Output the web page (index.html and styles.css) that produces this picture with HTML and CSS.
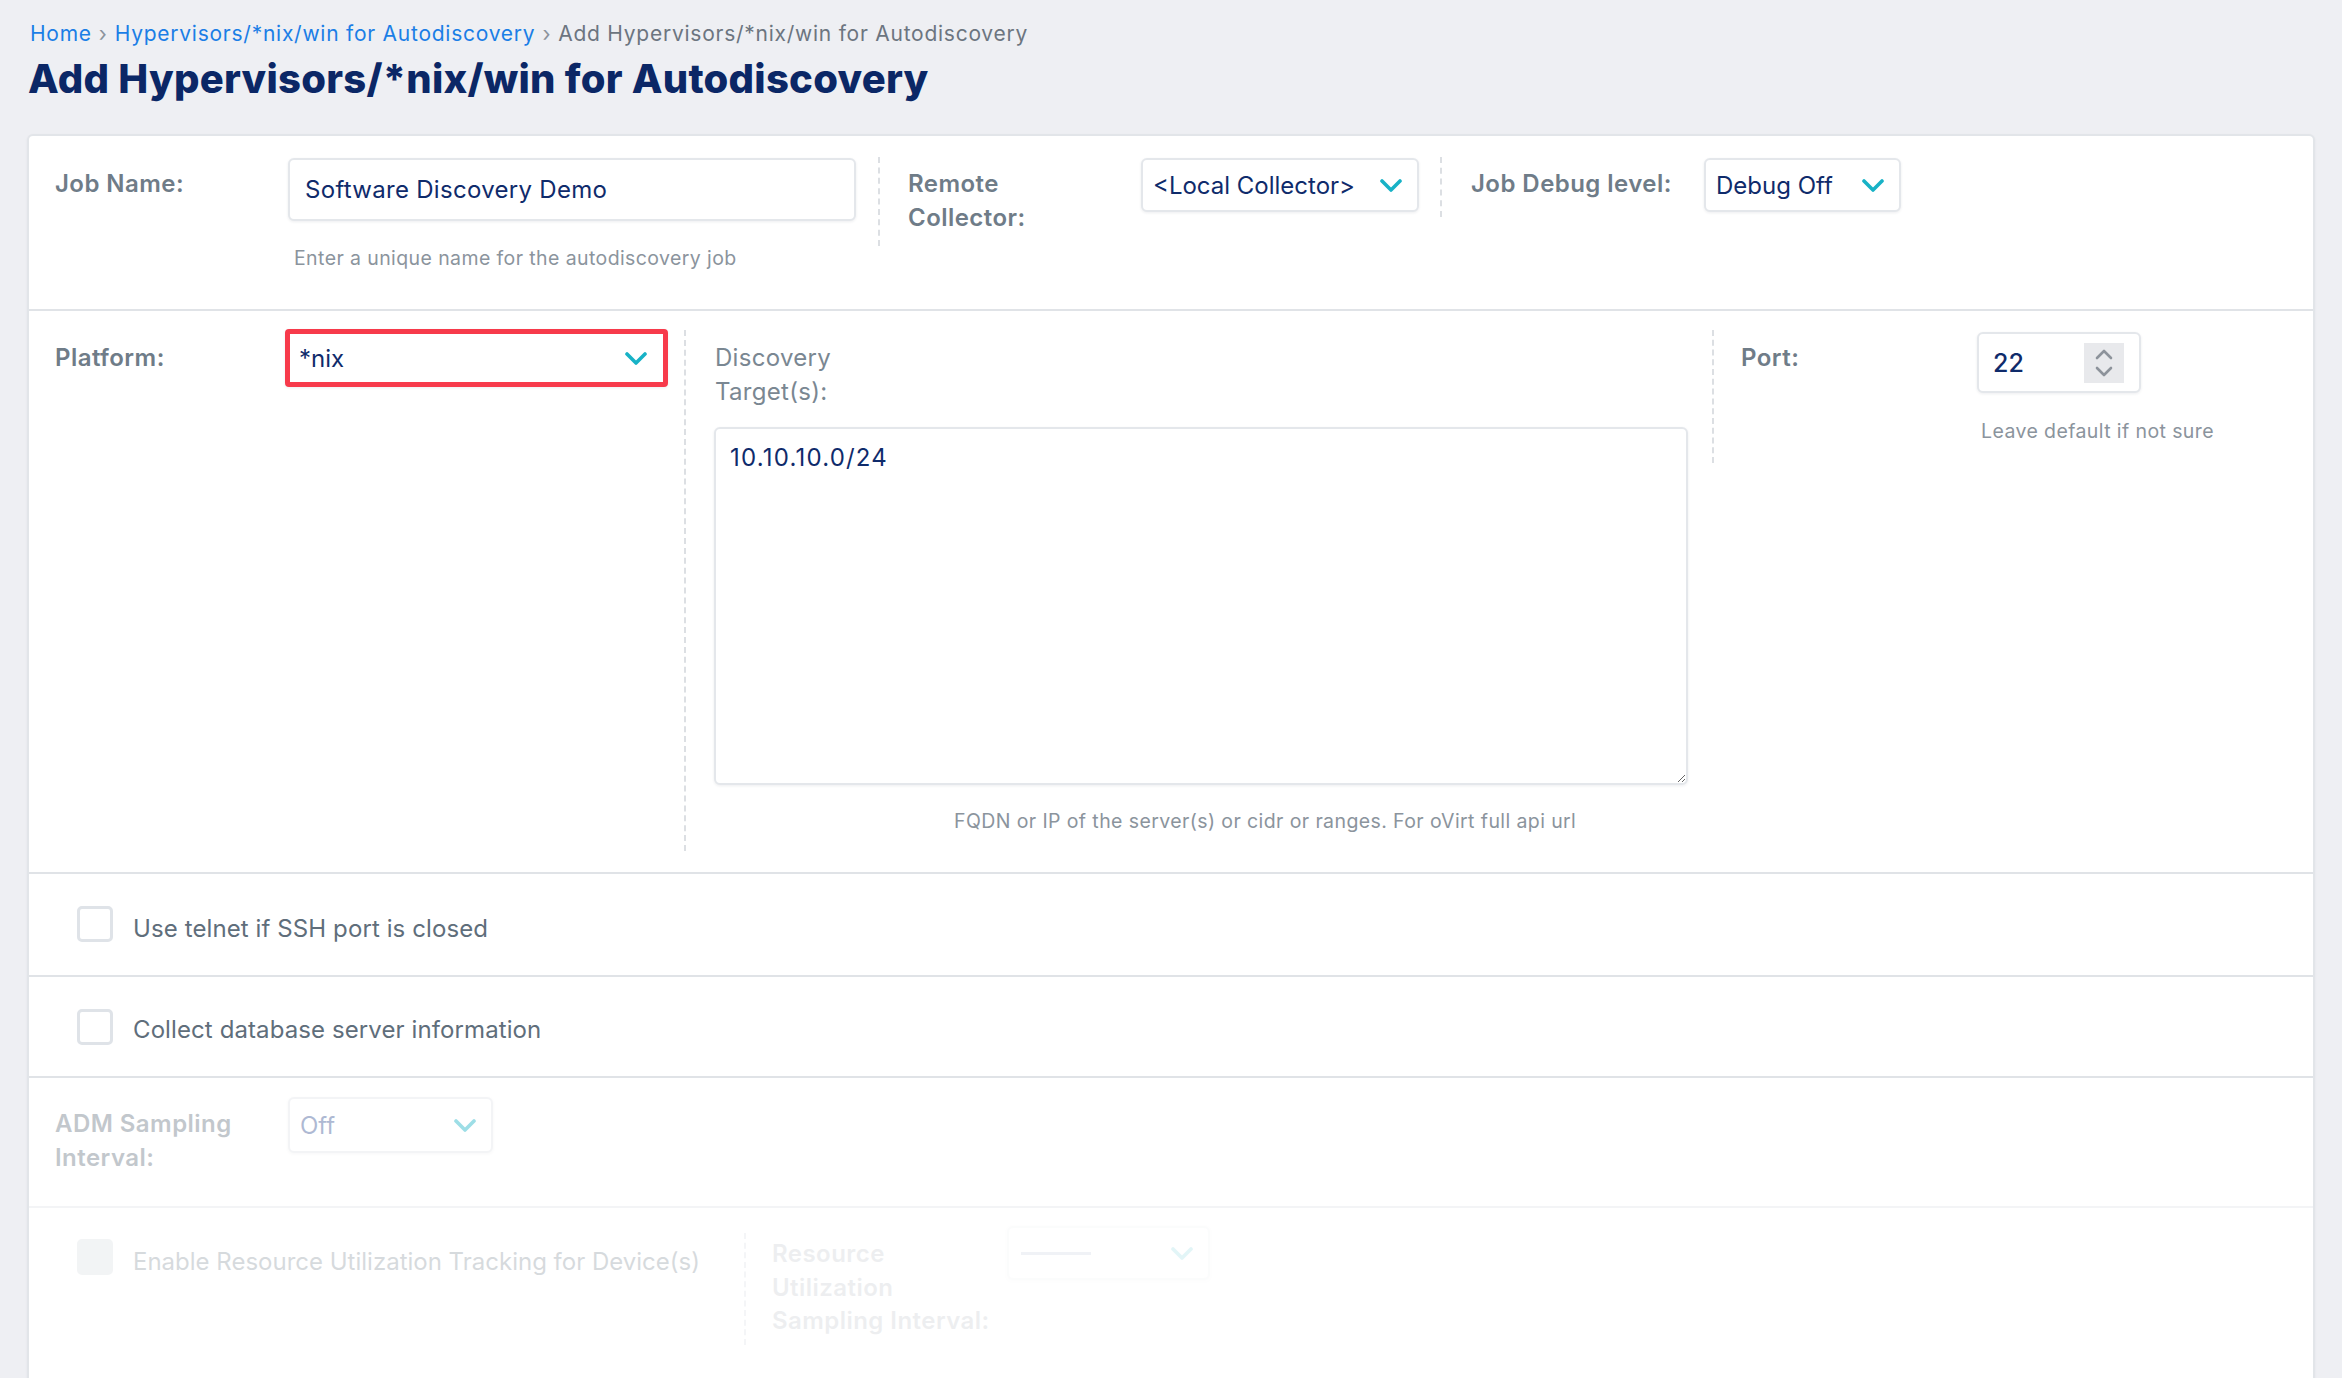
FILE: index.html
```html
<!DOCTYPE html>
<html lang="en">
<head>
<meta charset="utf-8">
<title>Add Hypervisors/*nix/win for Autodiscovery</title>
<link rel="stylesheet" href="styles.css">
</head>
<body>
<div class="page">
  <nav class="crumbs">
    <a class="crumb-link">Home</a><span class="sep">›</span><a class="crumb-link">Hypervisors/*nix/win for Autodiscovery</a><span class="sep">›</span><span class="crumb-current">Add Hypervisors/*nix/win for Autodiscovery</span>
  </nav>
  <h1 class="title">Add Hypervisors/*nix/win for Autodiscovery</h1>

  <div class="card">
    <!-- Row 1 -->
    <div class="row row-1">
      <div class="field">
        <div class="label bold">Job Name:</div>
        <div class="stack">
          <div class="input w-job">Software Discovery Demo</div>
          <div class="help help-job">Enter a unique name for the autodiscovery job</div>
        </div>
      </div>
      <div class="vdiv d-r1a"></div>
      <div class="field">
        <div class="label bold">Remote<br>Collector:</div>
        <div class="select w-collector"><span>&lt;Local Collector&gt;</span><svg class="chev" viewBox="0 0 22 13"><polyline points="2,2 11,11 20,2"/></svg></div>
      </div>
      <div class="vdiv d-r1b"></div>
      <div class="field">
        <div class="label bold">Job Debug level:</div>
        <div class="select w-debug"><span>Debug Off</span><svg class="chev" viewBox="0 0 22 13"><polyline points="2,2 11,11 20,2"/></svg></div>
      </div>
    </div>

    <!-- Row 2 -->
    <div class="row row-2">
      <div class="field">
        <div class="label bold lbl-platform">Platform:</div>
        <div class="select select-error w-platform"><span>*nix</span><svg class="chev" viewBox="0 0 22 13"><polyline points="2,2 11,11 20,2"/></svg></div>
      </div>
      <div class="vdiv d-r2a"></div>
      <div class="targets">
        <div class="label lbl-targets">Discovery<br>Target(s):</div>
        <textarea class="textarea">10.10.10.0/24</textarea>
        <div class="help help-targets">FQDN or IP of the server(s) or cidr or ranges. For oVirt full api url</div>
      </div>
      <div class="vdiv d-r2b"></div>
      <div class="field">
        <div class="label bold lbl-port">Port:</div>
        <div class="stack">
          <div class="number">
            <span>22</span>
            <span class="spin">
              <svg viewBox="0 0 18 28"><polyline points="2,9 9,2 16,9"/><polyline points="2,19 9,26 16,19"/></svg>
            </span>
          </div>
          <div class="help help-port">Leave default if not sure</div>
        </div>
      </div>
    </div>

    <!-- Row 3 -->
    <div class="row row-check row-3">
      <span class="checkbox"></span>
      <span class="check-text">Use telnet if SSH port is closed</span>
    </div>

    <!-- Row 4 -->
    <div class="row row-check row-4">
      <span class="checkbox"></span>
      <span class="check-text">Collect database server information</span>
    </div>

    <!-- Row 5 -->
    <div class="row row-5">
      <div class="faded">
        <div class="field">
          <div class="label bold lbl-adm">ADM Sampling<br>Interval:</div>
          <div class="select w-adm"><span>Off</span><svg class="chev" viewBox="0 0 22 13"><polyline points="2,2 11,11 20,2"/></svg></div>
        </div>
      </div>
    </div>

    <!-- Row 6 -->
    <div class="row row-6">
      <div class="row6-inner">
        <div class="check-group">
          <span class="checkbox checkbox-disabled"></span>
          <span class="check-text">Enable Resource Utilization Tracking for Device(s)</span>
        </div>
        <div class="vdiv d-r6"></div>
        <div class="field very-faded">
          <div class="label bold lbl-res">Resource<br>Utilization<br>Sampling Interval:</div>
          <div class="select w-res"><span class="dash-line"></span><svg class="chev" viewBox="0 0 22 13"><polyline points="2,2 11,11 20,2"/></svg></div>
        </div>
      </div>
    </div>
  </div>
</div>
</body>
</html>
```
FILE: styles.css
```css
* { box-sizing: border-box; }

html, body {
  margin: 0;
  padding: 0;
  background: #eeeff3;
  font-family: Inter, "Noto Sans", "Liberation Sans", sans-serif;
  color: #0f2b6b;
  overflow: hidden;
}

.page {
  padding: 19px 27px 0 27px;
}

.crumbs {
  font-size: 21px;
  line-height: 29px;
  padding-left: 3px;
  white-space: nowrap;
  letter-spacing: 0.75px;
}

.crumb-link { color: #1b7ee6; }
.crumb-current { color: #6c7580; }
.sep {
  color: #8b939c;
  margin: 0 7px;
}

.title {
  margin: 6px 0 0 1px;
  font-size: 40px;
  line-height: 50px;
  font-weight: 800;
  color: #0b2766;
  letter-spacing: 0.25px;
}

.card {
  margin-top: 30px;
  width: 2288px;
  height: 1300px;
  background: #ffffff;
  border: 2px solid #e2e5e9;
  border-radius: 6px;
  box-shadow: 0 1px 3px rgba(20, 30, 60, 0.05);
}

.row {
  display: flex;
  align-items: flex-start;
  padding-left: 26px;
  border-bottom: 2px solid #e0e3e7;
}

.field {
  display: flex;
  align-items: flex-start;
}

.stack {
  display: flex;
  flex-direction: column;
}

.label {
  width: 233px;
  font-size: 24px;
  line-height: 33.5px;
  color: #7a8792;
  padding-top: 9px;
  letter-spacing: 0.3px;
}

.label.bold {
  font-weight: 600;
  color: #6f7c88;
  letter-spacing: 0.45px;
}

.input, .select, .number {
  background: #fff;
  border: 2px solid #e4e7eb;
  border-radius: 6px;
  box-shadow: 0 1px 3px rgba(30, 40, 70, 0.08);
  font-size: 24px;
  color: #0f2b6b;
  display: flex;
  align-items: center;
  white-space: nowrap;
}

.input {
  height: 63px;
  padding-left: 15px;
  letter-spacing: 0.3px;
}

.w-job { width: 568px; }

.select {
  height: 54px;
  padding: 0 15px 0 10px;
  justify-content: space-between;
}

.w-collector { width: 278px; }
.w-debug { width: 197px; }

.chev {
  width: 22px;
  height: 13px;
  flex: none;
}
.chev polyline {
  fill: none;
  stroke: #18b2c6;
  stroke-width: 3.6;
  stroke-linecap: round;
  stroke-linejoin: round;
}

.help {
  font-size: 19.5px;
  line-height: 26px;
  color: #8b949d;
  letter-spacing: 0.4px;
  white-space: nowrap;
}

.help-job {
  margin-top: 24px;
  padding-left: 6px;
}

.vdiv {
  width: 0;
  border-left: 2px dashed #dcdfe3;
  flex: none;
}

.row-1 {
  padding-top: 22px;
  padding-bottom: 38px;
}

.d-r1a {
  height: 89px;
  margin: -1px 28px 0 22px;
}

.d-r1b {
  height: 60px;
  margin: -1px 29px 0 21px;
}

/* Row 2 */
.row-2 {
  padding-top: 18px;
  padding-bottom: 20px;
}

.lbl-platform {
  width: 230px;
  padding-top: 12px;
}

.select-error {
  height: 58px;
  border: 5px solid #f73a4b;
  border-radius: 4px;
  padding: 0 16px 0 9px;
}

.w-platform { width: 383px; }

.d-r2a {
  height: 521px;
  margin: 1px 28px 0 16px;
}

.targets {
  width: 974px;
  display: flex;
  flex-direction: column;
  padding-bottom: 18px;
}

.lbl-targets {
  width: auto;
  padding-top: 12px;
  padding-left: 1px;
}

.textarea {
  display: block;
  margin-top: 19px;
  width: 974px;
  height: 358px;
  border: 2px solid #e4e7eb;
  border-radius: 6px;
  box-shadow: 0 1px 3px rgba(30, 40, 70, 0.08);
  font-family: Inter, "Noto Sans", "Liberation Sans", sans-serif;
  font-size: 24px;
  line-height: 30px;
  letter-spacing: 1.2px;
  color: #0f2b6b;
  padding: 14px 14px;
  resize: both;
  outline: none;
}

.help-targets {
  margin-top: 23px;
  padding-left: 240px;
}

.d-r2b {
  height: 133px;
  margin: 1px 27px 0 24px;
}

.lbl-port {
  width: 236px;
  padding-top: 12px;
}

.number {
  margin-top: 3px;
  width: 164px;
  height: 61px;
  padding: 0 15px 0 14px;
  justify-content: space-between;
  font-weight: 500;
  font-size: 25px;
}

.spin {
  width: 40px;
  height: 40px;
  background: #e8e9ec;
  display: flex;
  align-items: center;
  justify-content: center;
}

.spin svg {
  width: 18px;
  height: 28px;
}
.spin polyline {
  fill: none;
  stroke: #8d939b;
  stroke-width: 2.6;
  stroke-linecap: round;
  stroke-linejoin: round;
}

.help-port {
  margin-top: 25px;
  padding-left: 4px;
}

/* Checkbox rows */
.row-check {
  padding-left: 48px;
  padding-top: 32px;
}

.row-3 { height: 103px; }
.row-4 { height: 101px; }

.checkbox {
  width: 36px;
  height: 36px;
  border: 3px solid #dfe3e8;
  border-radius: 5px;
  background: #fff;
  flex: none;
}

.check-text {
  margin-left: 20px;
  font-size: 24px;
  line-height: 36px;
  padding-top: 5px;
  color: #5f6e7b;
  letter-spacing: 0.1px;
  white-space: nowrap;
}

.row-4 .check-text { padding-top: 3px; }

/* Row 5 */
.row-5 {
  height: 130px;
  padding-top: 19px;
  border-bottom-color: #f3f4f6;
}

.faded { opacity: 0.42; }

.lbl-adm {
  padding-top: 10px;
  font-weight: 500;
  color: #6f7c88;
  letter-spacing: 0.2px;
}

.w-adm {
  width: 205px;
  height: 56px;
}
.w-adm span { color: #3f5a98; }

/* Row 6 */
.row-6 {
  border-bottom: none;
  padding-left: 48px;
  padding-top: 18px;
}

.very-faded { opacity: 0.12; }

.row6-inner {
  display: flex;
  align-items: flex-start;
}

.check-group {
  display: flex;
  align-items: flex-start;
  width: 667px;
  padding-top: 13px;
  opacity: 0.25;
}

.row-6 .check-text { letter-spacing: 0; }

.checkbox-disabled {
  background: #cfd4da;
  border-color: #cfd4da;
}

.d-r6 {
  height: 112px;
  margin: 7px 26px 0 0;
  border-left-color: #f4f5f7;
}

.lbl-res {
  width: 235px;
  padding-top: 11px;
  font-weight: 500;
  letter-spacing: 0;
}

.w-res { width: 203px; }

.dash-line {
  display: block;
  width: 70px;
  height: 3px;
  background: #8e9ab8;
  margin-left: 2px;
}
```
